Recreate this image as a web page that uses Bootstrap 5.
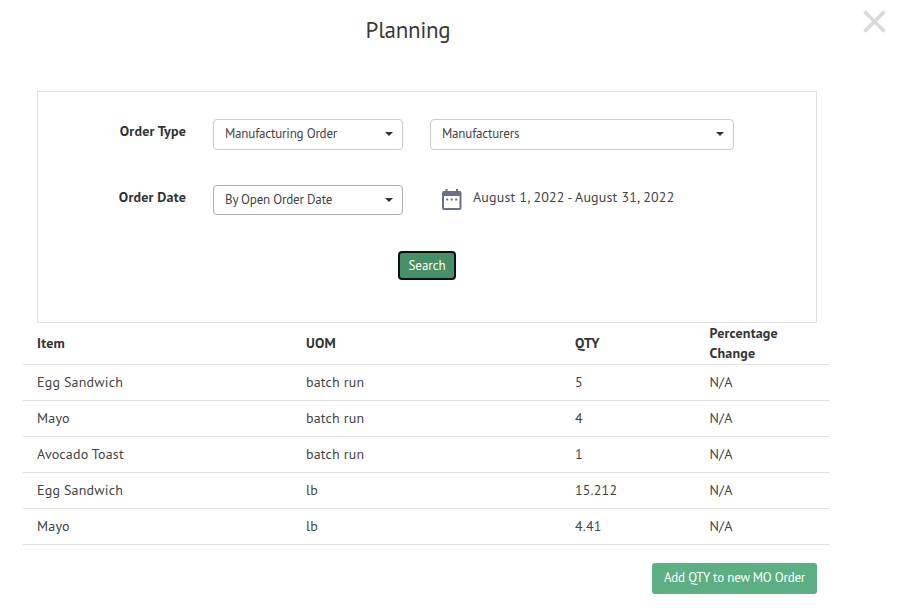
<!DOCTYPE html>
<html lang="en">
<head>
<meta charset="utf-8">
<meta name="viewport" content="width=device-width, initial-scale=1">
<title>Planning</title>
<link href="https://cdn.jsdelivr.net/npm/bootstrap@5.3.0/dist/css/bootstrap.min.css" rel="stylesheet">
<style>
body{font-family:"PT Sans","Noto Sans",sans-serif;font-size:14px;letter-spacing:.18px;line-height:20px;color:#444;height:614px;overflow:hidden}
.page-title{font-size:23px;letter-spacing:-.3px;line-height:28px;padding-top:16px;width:816px;height:91px;color:#3a3a3a}
.close-x{top:10px;right:18px;width:23px;height:23px;line-height:0}
.planning{width:807px;margin-left:23px}
.filter-panel{margin:0 13px 0 14px;height:232px;padding-top:27px;border:1px solid #e1e1e1}
.filter-line{height:66px}
.filter-label{width:148px;margin-right:27px;padding-top:2px;color:#333}
.picker{height:31px;padding:0 9px 2px 11px;border:1px solid #ccc;border-radius:4px;color:#444;font-size:13px;letter-spacing:-.18px;line-height:18px}
.picker:hover{border-color:#adadad}
.picker-sm{width:190px;margin-right:27px}
.picker-lg{width:304px}
.picker-open{height:30px;padding-bottom:0;border-color:#adadad}
.caret{border-top:4px solid #333;border-left:4px solid transparent;border-right:4px solid transparent}
.date-icon{margin:4px 11px 0 12px}
.date-text{padding-top:2px}
.btn-search{width:58px;height:29px;padding:0;background:#479067;border:2px solid #101010;border-radius:4px;color:#fff;font-size:13px;letter-spacing:-.05px;line-height:20px}
.btn-add{width:165px;height:31px;padding:0 0 2px;background:#5caf82;border:0;border-radius:3px;color:#fff;font-size:13px;letter-spacing:-.2px;margin-right:13px}
.grid-row{margin:0;height:36px;padding-bottom:2px;border-bottom:1px solid #e1e1e1}
.grid-row>*{padding:0 14px}
.grid-head{height:42px;color:#333}
.form-foot{padding-top:18px}
</style>
</head>
<body class="bg-white position-relative">
<h1 class="page-title text-center fw-normal m-0">Planning</h1>
<button type="button" class="close-x btn p-0 border-0 position-absolute" aria-label="Close">
<svg width="23" height="23" viewBox="0 0 23 23" fill="none" stroke="#d9d9db" stroke-width="3.6"><path d="M1.500 1.500l20 20M21.500 1.500l-20 20"/></svg>
</button>
<main class="planning">
<form class="filter-panel">
  <div class="filter-line d-flex align-items-start">
    <div class="filter-label text-end fw-bold">Order Type</div>
    <button type="button" class="picker picker-sm btn d-flex align-items-center justify-content-between">Manufacturing Order<span class="caret"></span></button>
    <button type="button" class="picker picker-lg btn d-flex align-items-center justify-content-between">Manufacturers<span class="caret"></span></button>
  </div>
  <div class="filter-line d-flex align-items-start">
    <div class="filter-label text-end fw-bold">Order Date</div>
    <button type="button" class="picker picker-sm picker-open btn d-flex align-items-center justify-content-between">By Open Order Date<span class="caret"></span></button>
    <svg class="date-icon" width="20" height="21" viewBox="0 0 20 21"><path fill="#6b7089" fill-rule="evenodd" d="M3.500 0h2v2h8.500V0h2v2h1.500a2 2 0 0 1 2 2v15a2 2 0 0 1-2 2h-15.500a2 2 0 0 1-2-2V4a2 2 0 0 1 2-2h1.500zM2 7v12h15.500V7zM4.200 9.500h2v2h-2zM8.700 9.500h2v2h-2zM13.200 9.500h2v2h-2z"/></svg>
    <span class="date-text">August 1, 2022 - August 31, 2022</span>
  </div>
  <div class="text-center"><button type="button" class="btn btn-search">Search</button></div>
</form>
<section>
  <div class="row grid-row grid-head align-items-center fw-bold"><div class="col-4">Item</div><div class="col-4">UOM</div><div class="col-2">QTY</div><div class="col-2">Percentage Change</div></div>
  <div class="row grid-row align-items-center"><div class="col-4">Egg Sandwich</div><div class="col-4">batch run</div><div class="col-2">5</div><div class="col-2">N/A</div></div>
  <div class="row grid-row align-items-center"><div class="col-4">Mayo</div><div class="col-4">batch run</div><div class="col-2">4</div><div class="col-2">N/A</div></div>
  <div class="row grid-row align-items-center"><div class="col-4">Avocado Toast</div><div class="col-4">batch run</div><div class="col-2">1</div><div class="col-2">N/A</div></div>
  <div class="row grid-row align-items-center"><div class="col-4">Egg Sandwich</div><div class="col-4">lb</div><div class="col-2">15.212</div><div class="col-2">N/A</div></div>
  <div class="row grid-row align-items-center"><div class="col-4">Mayo</div><div class="col-4">lb</div><div class="col-2">4.41</div><div class="col-2">N/A</div></div>
</section>
<div class="form-foot text-end"><button type="button" class="btn btn-add">Add QTY to new MO Order</button></div>
</main>
<script src="https://cdn.jsdelivr.net/npm/bootstrap@5.3.0/dist/js/bootstrap.bundle.min.js"></script>
</body>
</html>
